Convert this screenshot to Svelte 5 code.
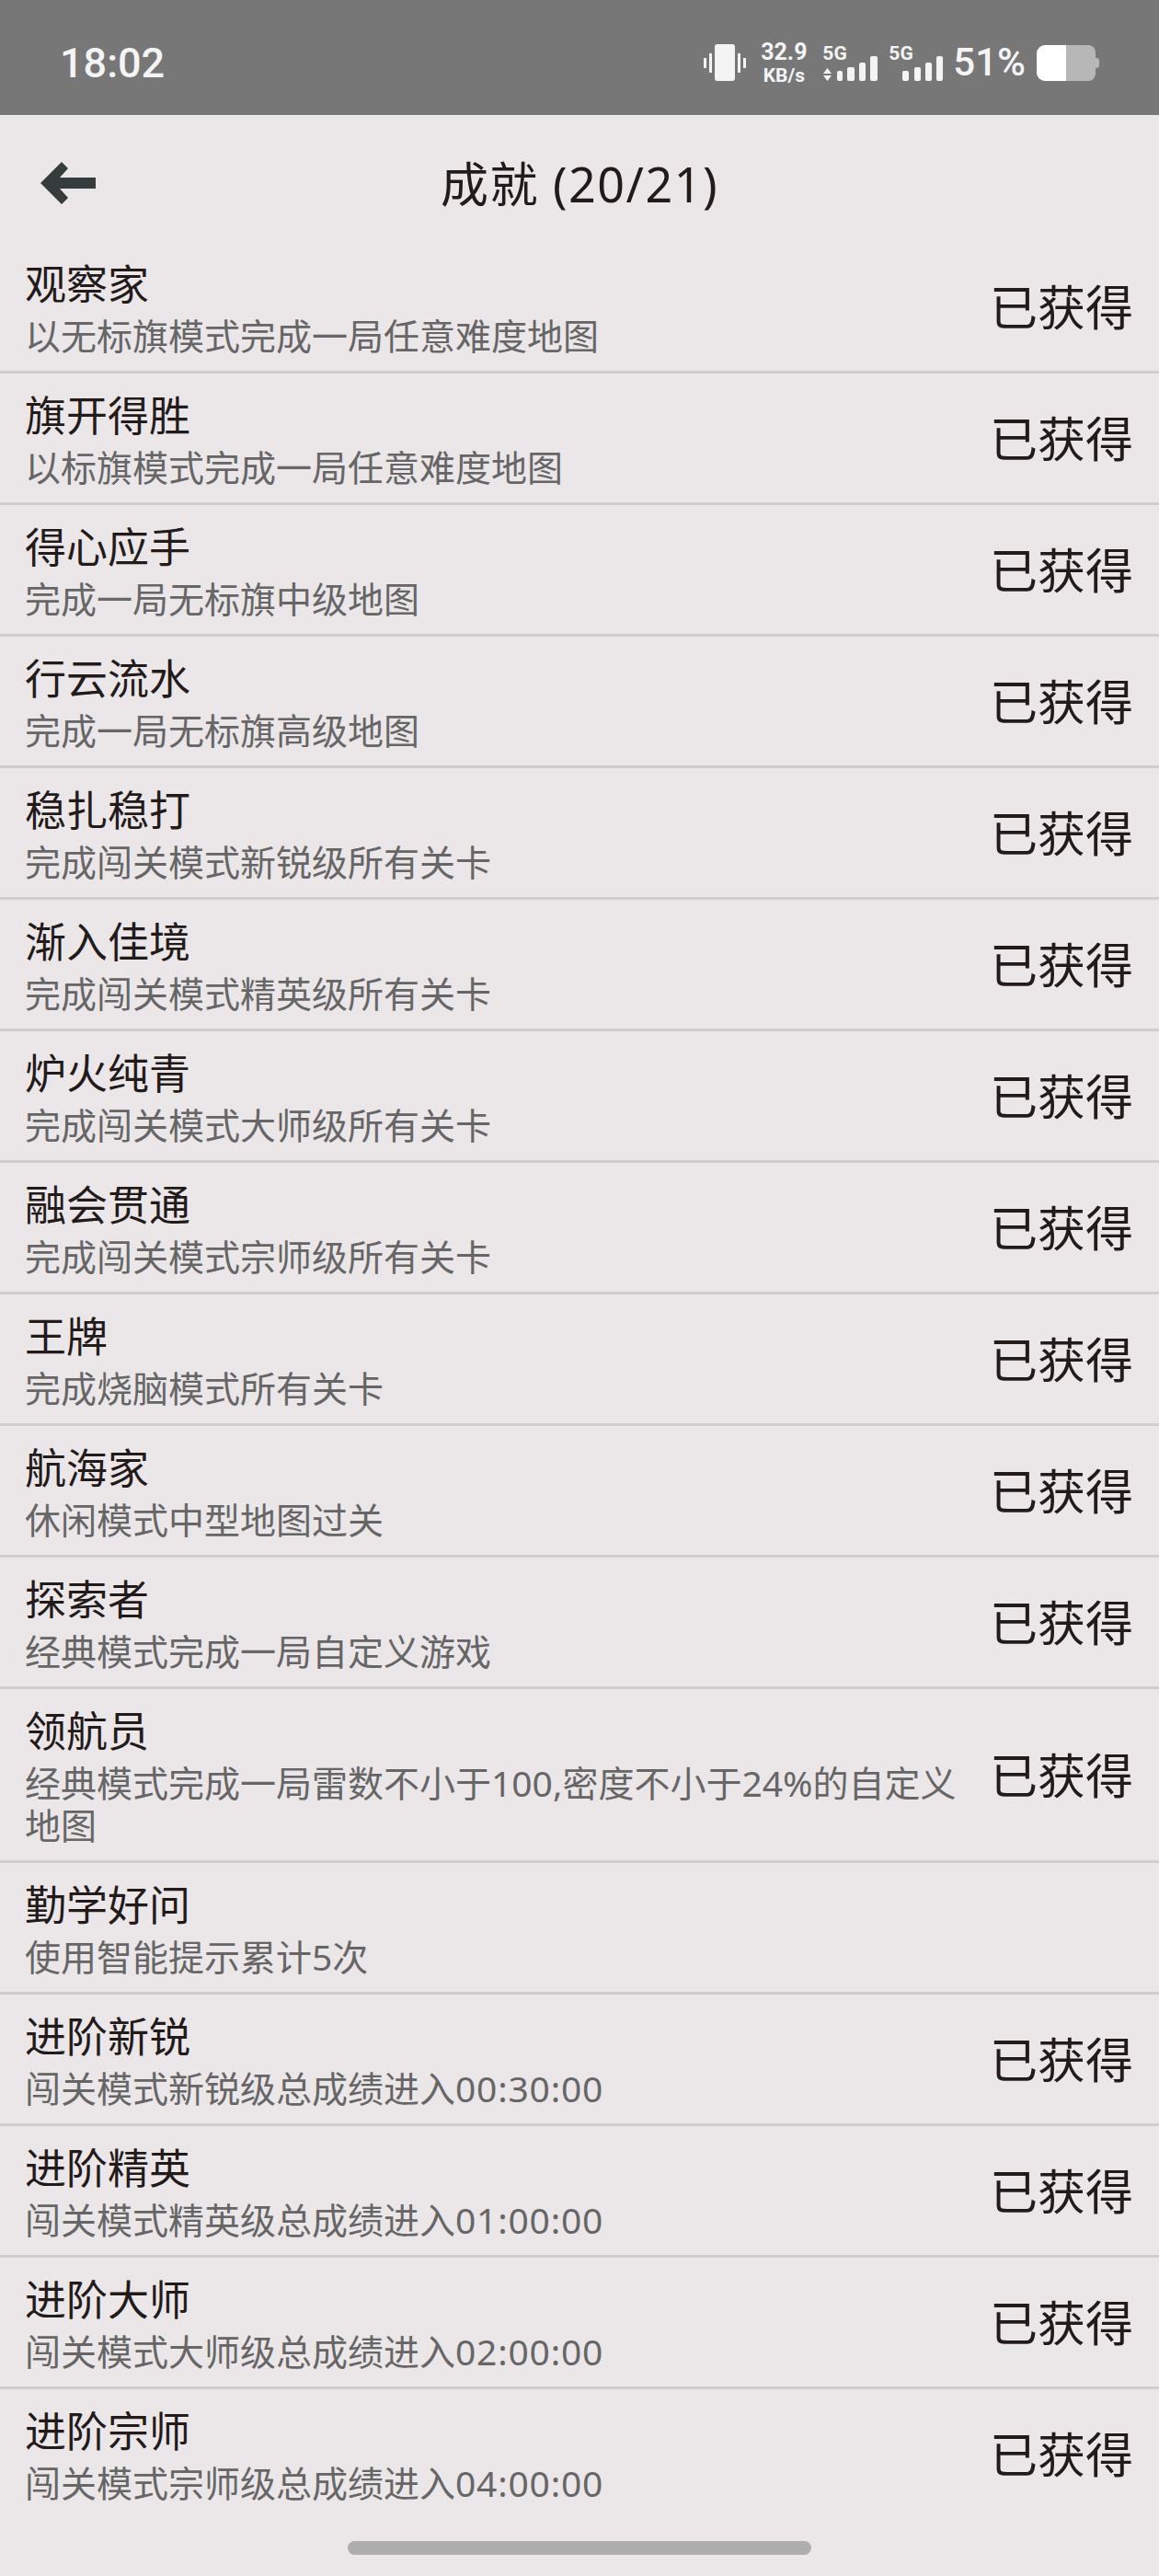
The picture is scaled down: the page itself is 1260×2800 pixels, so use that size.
<script>
    const items = [
        { name: '观察家', desc: '以无标旗模式完成一局任意难度地图', done: true },
        { name: '旗开得胜', desc: '以标旗模式完成一局任意难度地图', done: true },
        { name: '得心应手', desc: '完成一局无标旗中级地图', done: true },
        { name: '行云流水', desc: '完成一局无标旗高级地图', done: true },
        { name: '稳扎稳打', desc: '完成闯关模式新锐级所有关卡', done: true },
        { name: '渐入佳境', desc: '完成闯关模式精英级所有关卡', done: true },
        { name: '炉火纯青', desc: '完成闯关模式大师级所有关卡', done: true },
        { name: '融会贯通', desc: '完成闯关模式宗师级所有关卡', done: true },
        { name: '王牌', desc: '完成烧脑模式所有关卡', done: true },
        { name: '航海家', desc: '休闲模式中型地图过关', done: true },
        { name: '探索者', desc: '经典模式完成一局自定义游戏', done: true },
        { name: '领航员', desc: '经典模式完成一局雷数不小于100,密度不小于24%的自定义地图', done: true },
        { name: '勤学好问', desc: '使用智能提示累计5次', done: false },
        { name: '进阶新锐', desc: '闯关模式新锐级总成绩进入', time: '00:30:00', done: true },
        { name: '进阶精英', desc: '闯关模式精英级总成绩进入', time: '01:00:00', done: true },
        { name: '进阶大师', desc: '闯关模式大师级总成绩进入', time: '02:00:00', done: true },
        { name: '进阶宗师', desc: '闯关模式宗师级总成绩进入', time: '04:00:00', done: true }
    ];
</script>

<div class="page">
    <div class="status-bar">
        <span class="time">18:02</span>
        <div class="status-icons">
            <svg class="vibrate" width="47" height="40" viewBox="0 0 47 40" fill="#f4f4f4">
                <rect x="12" y="0" width="22" height="40" rx="3" />
                <rect x="0" y="15" width="3" height="11" />
                <rect x="6" y="10" width="3" height="21" />
                <rect x="37" y="10" width="3" height="21" />
                <rect x="43" y="15" width="3" height="11" />
            </svg>
            <div class="speed">
                <span class="speed-num">32.9</span>
                <span class="speed-unit">KB/s</span>
            </div>
            <div class="signal first">
                <span class="gen">5G</span>
                <svg width="60" height="28" viewBox="0 0 60 28" fill="#f4f4f4">
                    <path d="M1 20 L5.5 14 L10 20 Z M1 22 L10 22 L5.5 28 Z" />
                    <rect x="16" y="17" width="6" height="11" rx="2" />
                    <rect x="27" y="13" width="8" height="15" rx="2" />
                    <rect x="40" y="8" width="7" height="20" rx="2" />
                    <rect x="52" y="1" width="8" height="27" rx="2" />
                </svg>
            </div>
            <div class="signal second">
                <span class="gen">5G</span>
                <svg width="44" height="28" viewBox="0 0 44 28" fill="#f4f4f4">
                    <rect x="0" y="17" width="7" height="11" rx="2" />
                    <rect x="13" y="13" width="7" height="15" rx="2" />
                    <rect x="25" y="8" width="7" height="20" rx="2" />
                    <rect x="37" y="1" width="7" height="27" rx="2" />
                </svg>
            </div>
            <span class="percent">51%</span>
            <svg class="battery" width="68" height="39" viewBox="0 0 68 39">
                <path d="M9 0 H32 V39 H9 A9 9 0 0 1 0 30 V9 A9 9 0 0 1 9 0 Z" fill="#fff" />
                <path d="M32 0 H56 A8 8 0 0 1 64 8 V31 A8 8 0 0 1 56 39 H32 Z" fill="#b7b7b7" />
                <path d="M64 14 H65 A3 3 0 0 1 68 17 V22 A3 3 0 0 1 65 25 H64 Z" fill="#b7b7b7" />
            </svg>
        </div>
    </div>

    <div class="header">
        <svg class="back" width="60" height="46" viewBox="0 0 60 46" fill="#363b3b">
            <path d="M0 23 L23 0 L30 7 L21 17 H60 V29 H21 L30 39 L23 46 Z" />
        </svg>
        <span class="title">成就 (20/21)</span>
    </div>

    <div class="list">
        {#each items as item}
            <div class="row">
                <div class="text">
                    <div class="name">{item.name}</div>
                    <div class="desc">{item.desc}{#if item.time}<span class="num">{item.time}</span>{/if}</div>
                </div>
                {#if item.done}
                    <div class="state">已获得</div>
                {/if}
            </div>
        {/each}
    </div>

    <div class="home-bar"></div>
</div>

<style>
    :global(body) {
        background: #ebe7e9;
    }
    .page {
        width: 1260px;
        height: 2800px;
        overflow: hidden;
        background: #ebe7e9;
        font-family: "Noto Sans", "Noto Sans CJK SC", sans-serif;
        color: #231a1a;
        display: flex;
        flex-direction: column;
    }
    .status-bar {
        height: 125px;
        flex: none;
        background: #777;
        color: #f4f4f4;
        display: flex;
        align-items: center;
        justify-content: space-between;
        padding: 11px 65px 0 65px;
        box-sizing: border-box;
        font-family: Roboto, sans-serif;
    }
    .time {
        font-size: 45px;
        font-weight: 500;
        line-height: 1;
    }
    .status-icons {
        display: flex;
        align-items: center;
    }
    .vibrate {
        margin-right: 16px;
    }
    .speed {
        display: flex;
        flex-direction: column;
        align-items: center;
        font-weight: 700;
        width: 48px;
        margin-right: 18px;
        padding-top: 2px;
    }
    .speed-num {
        font-size: 25px;
        line-height: 26px;
    }
    .speed-unit {
        font-size: 21px;
        line-height: 24px;
    }
    .signal {
        position: relative;
        display: flex;
        align-items: flex-end;
        height: 40px;
    }
    .signal.first {
        margin-right: 12px;
    }
    .signal.second {
        margin-right: 11px;
    }
    .gen {
        position: absolute;
        top: 0;
        left: 0;
        font-size: 21px;
        font-weight: 700;
        line-height: 20px;
    }
    .signal.second svg {
        margin-left: 15px;
    }
    .percent {
        font-size: 42px;
        font-weight: 500;
        line-height: 1;
        margin-right: 12px;
    }
    .header {
        height: 138px;
        flex: none;
        display: flex;
        align-items: center;
        justify-content: center;
        position: relative;
        padding-top: 12px;
        box-sizing: border-box;
    }
    .back {
        position: absolute;
        left: 44px;
        top: 51px;
    }
    .title {
        font-size: 52px;
        line-height: 1;
        letter-spacing: 1.5px;
    }
    .row {
        display: flex;
        align-items: center;
        gap: 36px;
        padding: 13px 28px 15px 27px;
        border-bottom: 3px solid #d0cdcf;
    }
    .row:last-child {
        border-bottom: none;
    }
    .text {
        flex: 1;
        min-width: 0;
    }
    .name {
        font-size: 45px;
        line-height: 66px;
    }
    .desc {
        font-size: 39px;
        line-height: 46px;
        color: #666;
    }
    .num {
        letter-spacing: 0.8px;
    }
    .state {
        flex: none;
        font-size: 52px;
        line-height: 60px;
        padding-top: 3px;
    }
    .home-bar {
        width: 504px;
        height: 15px;
        border-radius: 8px;
        background: #aeaeae;
        margin: 25px auto 0;
        flex: none;
    }
</style>
